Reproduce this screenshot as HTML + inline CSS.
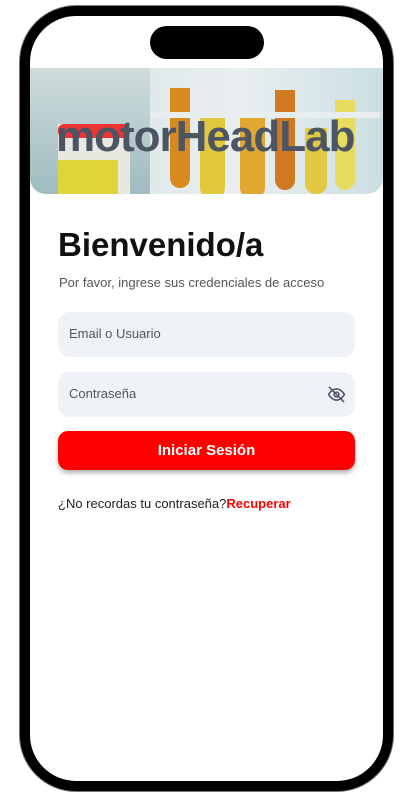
<!DOCTYPE html>
<html><head><style>
*{margin:0;padding:0;box-sizing:border-box}
body{width:412px;height:797px;background:#fff;position:relative;overflow:hidden;font-family:"Liberation Sans",sans-serif}
.phone{position:absolute;left:20px;top:6px;width:373px;height:785px;border:10px solid #000;border-radius:56px;background:#fff;box-shadow:0 0 0 1px #777;overflow:hidden}
.notch{position:absolute;left:120px;top:10px;width:114px;height:33px;background:#000;border-radius:17px}
.banner{position:absolute;left:0;top:52px;width:353px;height:126px;border-radius:0 0 16px 16px;overflow:hidden;background:linear-gradient(90deg,#b9cfd2 0%,#dfe9ea 30%,#e9eef0 60%,#cbdfe2 100%)}
.logo{position:absolute;left:26px;top:44px;font-size:44px;font-weight:bold;color:#4b5563;letter-spacing:-1px}
h1{position:absolute;left:28px;top:210px;font-size:33px;font-weight:bold;color:#111}
.sub{position:absolute;left:29px;top:259px;font-size:13px;color:#555}
.inp{position:absolute;left:28px;width:297px;height:45px;background:#eff2f7;border-radius:12px;font-size:13px;color:#555;padding:14px 11px}
.btn{position:absolute;left:28px;top:415px;width:297px;height:39px;background:#ff0000;border-radius:10px;color:#fff;font-weight:bold;font-size:15px;text-align:center;line-height:39px;box-shadow:0 3px 5px rgba(0,0,0,.3)}
.fg{position:absolute;left:28px;top:480px;font-size:13px;color:#222}
.fg b{color:#f00}
</style></head><body>
<div class="phone">
<div class="banner">
<div style="position:absolute;left:0;top:0;width:120px;height:126px;background:linear-gradient(180deg,#cfdcdc,#9fbcc0)"></div>
<div style="position:absolute;left:28px;top:56px;width:72px;height:75px;background:#e8e8e0"></div>
<div style="position:absolute;left:28px;top:56px;width:72px;height:14px;background:#e33;border-radius:6px"></div>
<div style="position:absolute;left:28px;top:92px;width:60px;height:40px;background:#ded53a"></div>
<div style="position:absolute;left:140px;top:20px;width:20px;height:100px;background:#d88a1f;border-radius:0 0 10px 10px"></div>
<div style="position:absolute;left:170px;top:50px;width:25px;height:80px;background:#e0c83a;border-radius:0 0 10px 10px"></div>
<div style="position:absolute;left:210px;top:50px;width:25px;height:80px;background:#e0a830;border-radius:0 0 10px 10px"></div>
<div style="position:absolute;left:245px;top:22px;width:20px;height:100px;background:#cf7a20;border-radius:0 0 10px 10px"></div>
<div style="position:absolute;left:275px;top:60px;width:22px;height:66px;background:#e3c843;border-radius:0 0 10px 10px"></div>
<div style="position:absolute;left:305px;top:32px;width:20px;height:90px;background:#e8dc60;border-radius:0 0 10px 10px"></div>
<div style="position:absolute;left:120px;top:44px;width:230px;height:6px;background:#e8eeee"></div>
<div class="logo">motorHeadLab</div>
</div>
<div class="notch"></div>
<h1>Bienvenido/a</h1>
<div class="sub">Por favor, ingrese sus credenciales de acceso</div>
<div class="inp" style="top:296px">Email o Usuario</div>
<div class="inp" style="top:356px">Contraseña
<svg style="position:absolute;right:8px;top:13px" width="21" height="19" viewBox="0 0 24 24" fill="none" stroke="#4b5563" stroke-width="2" stroke-linecap="round"><path d="M2 12s4-7 10-7 10 7 10 7-4 7-10 7S2 12 2 12z"/><circle cx="12" cy="12" r="3"/><path d="M3 3l18 18"/></svg></div>
<div class="btn">Iniciar Sesión</div>
<div class="fg">¿No recordas tu contraseña?<b>Recuperar</b></div>
</div>
</body></html>
